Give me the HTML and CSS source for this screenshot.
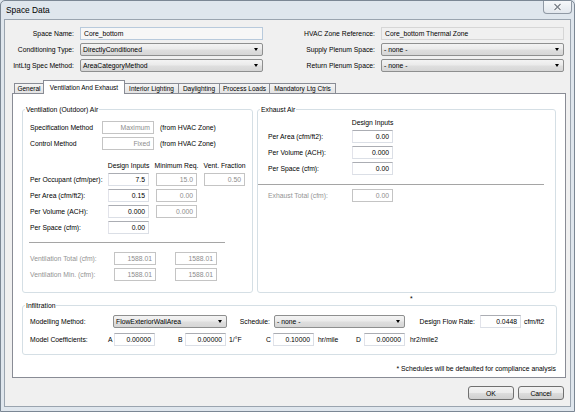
FILE: index.html
```html
<!DOCTYPE html>
<html>
<head>
    <title>Space Data</title>
    <link rel="stylesheet" href="styles.css">
</head>
<body>
<div class="window">
    <div class="titlebar">
        <span class="title">Space Data</span>
        <div class="close-btn">
            <svg width="9" height="8" viewBox="0 0 9 8">
                <path d="M1.5 1 L7.5 7 M7.5 1 L1.5 7" stroke="#ffffff" stroke-width="3"/>
                <path d="M1.5 1 L7.5 7 M7.5 1 L1.5 7" stroke="#7d838b" stroke-width="1.4"/>
            </svg>
        </div>
    </div>

    <div class="client">
        <div class="top-form">
            <label>Space Name:</label>
            <div class="field ro">Core_bottom</div>
            <label>HVAC Zone Reference:</label>
            <div class="field dis">Core_bottom Thermal Zone</div>

            <label>Conditioning Type:</label>
            <div class="combo"><span>DirectlyConditioned</span><i class="arrow"></i></div>
            <label>Supply Plenum Space:</label>
            <div class="combo"><span>- none -</span><i class="arrow"></i></div>

            <label>IntLtg Spec Method:</label>
            <div class="combo"><span>AreaCategoryMethod</span><i class="arrow"></i></div>
            <label>Return Plenum Space:</label>
            <div class="combo"><span>- none -</span><i class="arrow"></i></div>
        </div>

        <div class="tabs">
            <div class="tab t-general">General</div>
            <div class="tab t-vent active">Ventilation And Exhaust</div>
            <div class="tab t-intltg">Interior Lighting</div>
            <div class="tab t-day">Daylighting</div>
            <div class="tab t-proc">Process Loads</div>
            <div class="tab t-mand">Mandatory Ltg Ctrls</div>
        </div>

        <div class="panel">
            <div class="groups">
                <fieldset class="group vent">
                    <legend>Ventilation (Outdoor) Air</legend>
                    <div class="gbody">
                        <div class="row spec">
                            <span>Specification Method</span>
                            <div class="tb dis">Maximum</div>
                            <span class="note">(from HVAC Zone)</span>
                        </div>
                        <div class="row spec">
                            <span>Control Method</span>
                            <div class="tb dis">Fixed</div>
                            <span class="note">(from HVAC Zone)</span>
                        </div>

                        <div class="hdr dsg-cols">
                            <span></span>
                            <span>Design Inputs</span>
                            <span>Minimum Req.</span>
                            <span>Vent. Fraction</span>
                        </div>
                        <div class="row dsg-cols">
                            <span>Per Occupant (cfm/per):</span>
                            <div class="tb">7.5</div>
                            <div class="tb dis">15.0</div>
                            <div class="tb dis">0.50</div>
                        </div>
                        <div class="row dsg-cols">
                            <span>Per Area (cfm/ft2):</span>
                            <div class="tb">0.15</div>
                            <div class="tb dis">0.00</div>
                        </div>
                        <div class="row dsg-cols">
                            <span>Per Volume (ACH):</span>
                            <div class="tb">0.000</div>
                            <div class="tb dis">0.000</div>
                        </div>
                        <div class="row dsg-cols">
                            <span>Per Space (cfm):</span>
                            <div class="tb">0.00</div>
                        </div>

                        <div class="sep vent-sep"></div>

                        <div class="row tot first">
                            <span class="gray">Ventilation Total (cfm):</span>
                            <div class="tb dis">1588.01</div>
                            <div class="tb dis">1588.01</div>
                        </div>
                        <div class="row tot">
                            <span class="gray">Ventilation Min. (cfm):</span>
                            <div class="tb dis">1588.01</div>
                            <div class="tb dis">1588.01</div>
                        </div>
                    </div>
                </fieldset>

                <fieldset class="group exhaust">
                    <legend>Exhaust Air</legend>
                    <div class="gbody">
                        <div class="hdr exh-cols">
                            <span></span>
                            <span>Design Inputs</span>
                        </div>
                        <div class="row exh-cols">
                            <span>Per Area (cfm/ft2):</span>
                            <div class="tb">0.00</div>
                        </div>
                        <div class="row exh-cols">
                            <span>Per Volume (ACH):</span>
                            <div class="tb">0.000</div>
                        </div>
                        <div class="row exh-cols">
                            <span>Per Space (cfm):</span>
                            <div class="tb">0.00</div>
                        </div>

                        <div class="sep exh-sep"></div>

                        <div class="row exh-cols exh-total">
                            <span class="gray">Exhaust Total (cfm):</span>
                            <div class="tb dis">0.00</div>
                        </div>
                    </div>
                </fieldset>
            </div>

            <div class="star">*</div>

            <fieldset class="group infil">
                <legend>Infiltration</legend>
                <div class="gbody">
                    <div class="row infil-1">
                        <span>Modelling Method:</span>
                        <div class="combo"><span>FlowExteriorWallArea</span><i class="arrow"></i></div>
                        <span class="rlbl">Schedule:</span>
                        <div class="combo"><span>- none -</span><i class="arrow"></i></div>
                        <span class="rlbl flow">Design Flow Rate:</span>
                        <div class="tb">0.0448</div>
                        <span class="unit">cfm/ft2</span>
                    </div>
                    <div class="row infil-2">
                        <span>Model Coefficients:</span>
                        <span>A</span>
                        <div class="tb">0.00000</div>
                        <span></span>
                        <span>B</span>
                        <div class="tb">0.00000</div>
                        <span class="unit">1/&deg;F</span>
                        <span>C</span>
                        <div class="tb">0.10000</div>
                        <span class="unit u-mile">hr/mile</span>
                        <span>D</span>
                        <div class="tb">0.00000</div>
                        <span class="unit u-mile2">hr2/mile2</span>
                    </div>
                </div>
            </fieldset>

            <div class="footnote">* Schedules will be defaulted for compliance analysis</div>
        </div>

        <div class="buttons">
            <button class="btn">OK</button>
            <button class="btn">Cancel</button>
        </div>
    </div>
</div>
</body>
</html>
```

FILE: styles.css
```css
* {
    box-sizing: border-box;
}

body {
    margin: 0;
    font-family: "Liberation Sans", Arial, sans-serif;
    font-size: 6.8px;
    color: #000;
    background-color: #dfe6ed;
}

.window {
    width: 575px;
    height: 412px;
    display: flex;
    flex-direction: column;
    background-color: #dfe6ed;
    border: 1px solid #7b8794;
    border-radius: 5px 5px 0 0;
    overflow: hidden;
}

/* title bar */
.titlebar {
    height: 18px;
    display: flex;
    align-items: flex-start;
}

.title {
    font-size: 8.4px;
    line-height: 9px;
    padding: 5px 0 0 5px;
}

.close-btn {
    margin-left: auto;
    margin-right: 2px;
    width: 29px;
    height: 13px;
    display: flex;
    align-items: center;
    justify-content: center;
    border: 1px solid #9099a4;
    border-top: none;
    border-radius: 0 0 4px 4px;
    background: linear-gradient(#f6f8fa, #e2e7ed);
}

.client {
    flex: 1;
    margin: 0 3px 4px 3px;
    border: 1px solid #9aa4af;
    background-color: #f0f0f0;
}

/* top fields */
.top-form {
    display: grid;
    grid-template-columns: 75px 183px 118px 183px;
    grid-auto-rows: 13px;
    row-gap: 3px;
    margin-top: 7px;
}

.top-form label {
    text-align: right;
    padding-right: 6px;
    line-height: 13px;
    white-space: nowrap;
}

.field {
    height: 13px;
    line-height: 11px;
    padding-left: 3px;
    border: 1px solid #d9d9d9;
}

.field.ro {
    background-color: #f7f7f7;
    border-color: #b8cadc;
}

.field.dis {
    background-color: #f0f0f0;
    border-color: #d6d6d6;
}

.combo {
    height: 13px;
    display: flex;
    align-items: center;
    padding: 0 4px 0 2px;
    border: 1px solid #8e8f8f;
    border-radius: 2px;
    background: linear-gradient(#f3f3f3, #ebebeb 45%, #dedede 55%, #d6d6d6);
    white-space: nowrap;
}

.combo span {
    flex: 1;
}

.arrow {
    width: 0;
    height: 0;
    border-left: 2.5px solid transparent;
    border-right: 2.5px solid transparent;
    border-top: 3px solid #000;
}

/* tabs */
.tabs {
    display: flex;
    align-items: flex-end;
    height: 13px;
    margin: 8px 0 0 9px;
}

.tab {
    height: 10px;
    line-height: 9px;
    margin-right: -1px;
    font-size: 6.5px;
    text-align: center;
    white-space: nowrap;
    overflow: hidden;
    border: 1px solid #898c95;
    border-bottom: none;
    background: linear-gradient(#f5f5f5, #e3e3e3);
}

.tab.active {
    position: relative;
    z-index: 1;
    height: 14px;
    margin-bottom: -1px;
    padding-top: 2px;
    background: #fff;
}

.t-general { width: 30px; }
.t-vent { width: 82px; }
.t-intltg { width: 55px; }
.t-day { width: 42px; }
.t-proc { width: 51px; }
.t-mand { width: 67px; }

.panel {
    width: 554px;
    height: 285px;
    margin-left: 7px;
    padding: 11px 9px 0 9px;
    border: 1px solid #898c95;
    background-color: #fff;
}

/* group boxes */
.groups {
    display: flex;
    gap: 4px;
}

.group {
    margin: 0;
    padding: 0;
    min-width: 0;
    border: 1px solid #d5dfe5;
    border-radius: 3px;
}

.group legend {
    margin-left: 2px;
    padding: 0 1px;
    line-height: 9px;
}

.vent { width: 231px; }
.exhaust { width: 299px; }
.infil { width: 535px; }

.vent .gbody { padding: 7px 0 11px 7px; }
.exhaust .gbody { padding: 4px 0 0 10px; }
.infil .gbody { padding: 2px 0 8px 7px; }

.row {
    display: grid;
    height: 13px;
    line-height: 13px;
    margin-top: 3px;
    white-space: nowrap;
}

.vent .spec:first-child {
    margin-top: 0;
}

.spec { grid-template-columns: 72px 52px auto; }
.note { padding-left: 6px; }

.dsg-cols {
    grid-template-columns: 71px 41px 41px 41px;
    column-gap: 7px;
}

.exh-cols { grid-template-columns: 84px 41px; }

.tot {
    grid-template-columns: 65px 42px 42px;
    column-gap: 19px;
}

.tot.first { margin-top: 9px; }
.exh-total { margin-top: 4px; }

.hdr {
    display: grid;
    line-height: 9px;
    white-space: nowrap;
}

.hdr span {
    justify-self: center;
}

.vent .hdr { margin-top: 11px; }

.sep {
    height: 1px;
    background-color: #a5a5a5;
}

.vent-sep {
    width: 196px;
    margin: 8px 0 0 -1px;
}

.exh-sep {
    width: 286px;
    margin: 9px 0 0 -10px;
}

.gray {
    color: #939393;
}

.tb {
    height: 13px;
    line-height: 11px;
    text-align: right;
    padding-right: 3px;
    border: 1px solid #dbdfe6;
    border-top-color: #abadb3;
    border-left-color: #e2e3ea;
    background-color: #fff;
}

.tb.dis {
    color: #8d8d8d;
    border-color: #c4c4c4;
}

/* infiltration */
.star {
    height: 8px;
    line-height: 8px;
    padding: 2px 0 0 388px;
}

.infil-1 {
    grid-template-columns: 83px 114px 47px 131px 75px 41px auto;
}

.infil-2 {
    margin-top: 5px;
    grid-template-columns: 78px 6px 41px 23px 7px 41px 40px 7px 41px 42px 8px 41px auto;
}

.rlbl {
    text-align: right;
    padding-right: 4px;
}

.rlbl.flow {
    padding-right: 5px;
}

.unit { padding-left: 3px; }
.u-mile { padding-left: 4px; }
.u-mile2 { padding-left: 5px; }

.footnote {
    margin-top: 9px;
    line-height: 9px;
    text-align: right;
}

/* dialog buttons */
.buttons {
    display: flex;
    justify-content: flex-end;
    gap: 4px;
    margin-top: 8px;
    padding-right: 6px;
}

.btn {
    width: 46px;
    height: 14px;
    padding: 0;
    font-family: "Liberation Sans", Arial, sans-serif;
    font-size: 6.8px;
    color: #000;
    border: 1px solid #707070;
    border-radius: 3px;
    background: linear-gradient(#f2f2f2, #ebebeb 50%, #dddddd 50%, #cfcfcf);
}
```
